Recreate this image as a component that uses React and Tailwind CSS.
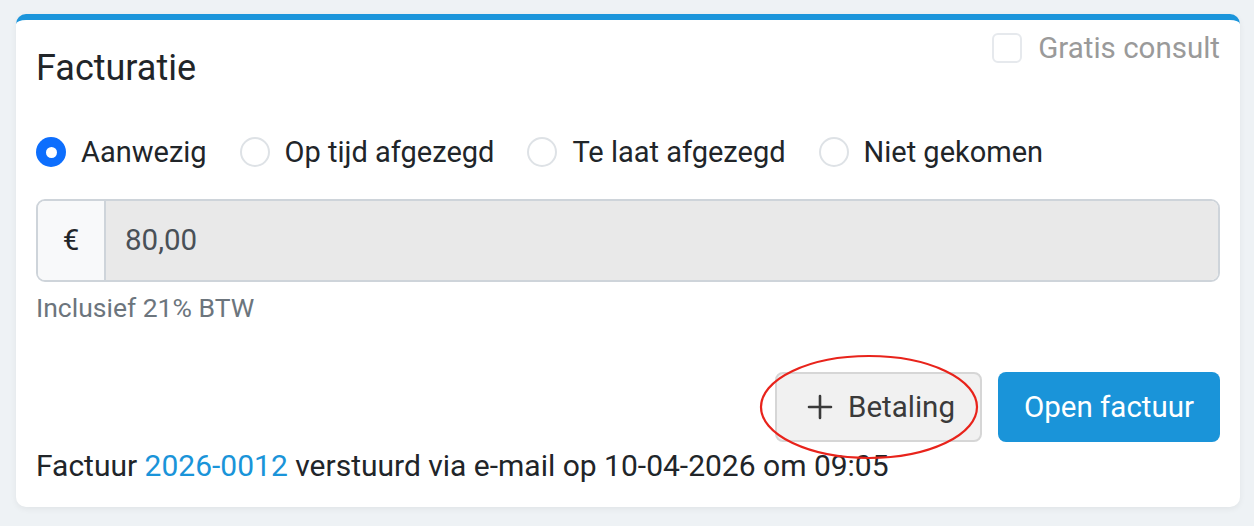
import React from 'react';

const options = ['Aanwezig', 'Op tijd afgezegd', 'Te laat afgezegd', 'Niet gekomen'];

function Radio({ label, checked }) {
  return (
    <label className="flex items-center gap-[15px]">
      {checked ? (
        <span className="flex h-[30px] w-[30px] items-center justify-center rounded-full bg-[#0d6efd]">
          <span className="h-[11px] w-[11px] rounded-full bg-white" />
        </span>
      ) : (
        <span className="h-[30px] w-[30px] rounded-full border-2 border-[#dee2e6] bg-white" />
      )}
      <span className="text-[29px] leading-[34px] text-[#212529]">{label}</span>
    </label>
  );
}

export default function App() {
  return (
    <div className="min-h-[526px] w-full bg-[#eef2f5] pt-[14px] pb-[18px] pl-[16px] pr-[14px]" style={{ fontFamily: 'Roboto, "Noto Sans", sans-serif' }}>
      <div className="relative rounded-[10px] border-t-[6px] border-[#1b95db] bg-white px-[20px] pb-[24px] shadow-[0_2px_6px_rgba(0,0,0,0.06)]">
        <div className="flex items-start justify-between pt-[13px]">
          <h2 className="mt-[14px] text-[36px] leading-[42px] font-normal text-[#212529]">Facturatie</h2>
          <label className="flex h-[30px] items-center gap-[16px]">
            <span className="h-[30px] w-[30px] rounded-[6px] border-2 border-[#e6e9ed] bg-white" />
            <span className="text-[29.5px] leading-[34px] text-[#9a9a9a]">Gratis consult</span>
          </label>
        </div>

        <div className="mt-[46px] flex items-center gap-[33px]">
          {options.map((o, i) => (
            <Radio key={o} label={o} checked={i === 0} />
          ))}
        </div>

        <div className="mt-[30px] flex h-[83px] overflow-hidden rounded-[9px] border-2 border-[#ced4da]">
          <div className="flex w-[68px] items-center justify-center border-r-2 border-[#ced4da] bg-[#f8f9fa] text-[29.5px] text-[#212529]">€</div>
          <div className="flex flex-1 items-center bg-[#e9e9e9] pl-[19px] text-[29.5px] text-[#495057]">80,00</div>
        </div>

        <p className="mt-[11px] text-[26.5px] leading-[30px] text-[#6c757d]">Inclusief 21% BTW</p>

        <div className="mt-[49px] flex justify-end gap-[16px]">
          <button className="flex h-[70px] items-center gap-[14px] rounded-[8px] border-2 border-[#d6d6d6] bg-[#f1f1f1] pl-[29px] pr-[25px] text-[29.5px] text-[#3a3a3a]">
            <svg width="28" height="28" viewBox="0 0 28 28" fill="none" stroke="#3a3a3a" strokeWidth="2.6" strokeLinecap="round">
              <path d="M14 3v22M3 14h22" />
            </svg>
            Betaling
          </button>
          <button className="flex h-[70px] items-center rounded-[8px] bg-[#1a94d9] px-[26px] text-[29.5px] text-white">Open factuur</button>
        </div>

        <p className="mt-[7px] text-[30px] leading-[34px] text-[#212529]">
          Factuur <span className="text-[#1a94d9]">2026-0012</span> verstuurd via e-mail op 10-04-2026 om 09:05
        </p>

        <svg className="pointer-events-none absolute left-[743px] top-[334px]" width="220" height="106" viewBox="0 0 220 106" fill="none">
          <ellipse cx="110" cy="53" rx="108" ry="51" stroke="#e8231b" strokeWidth="2.2" />
        </svg>
      </div>
    </div>
  );
}
